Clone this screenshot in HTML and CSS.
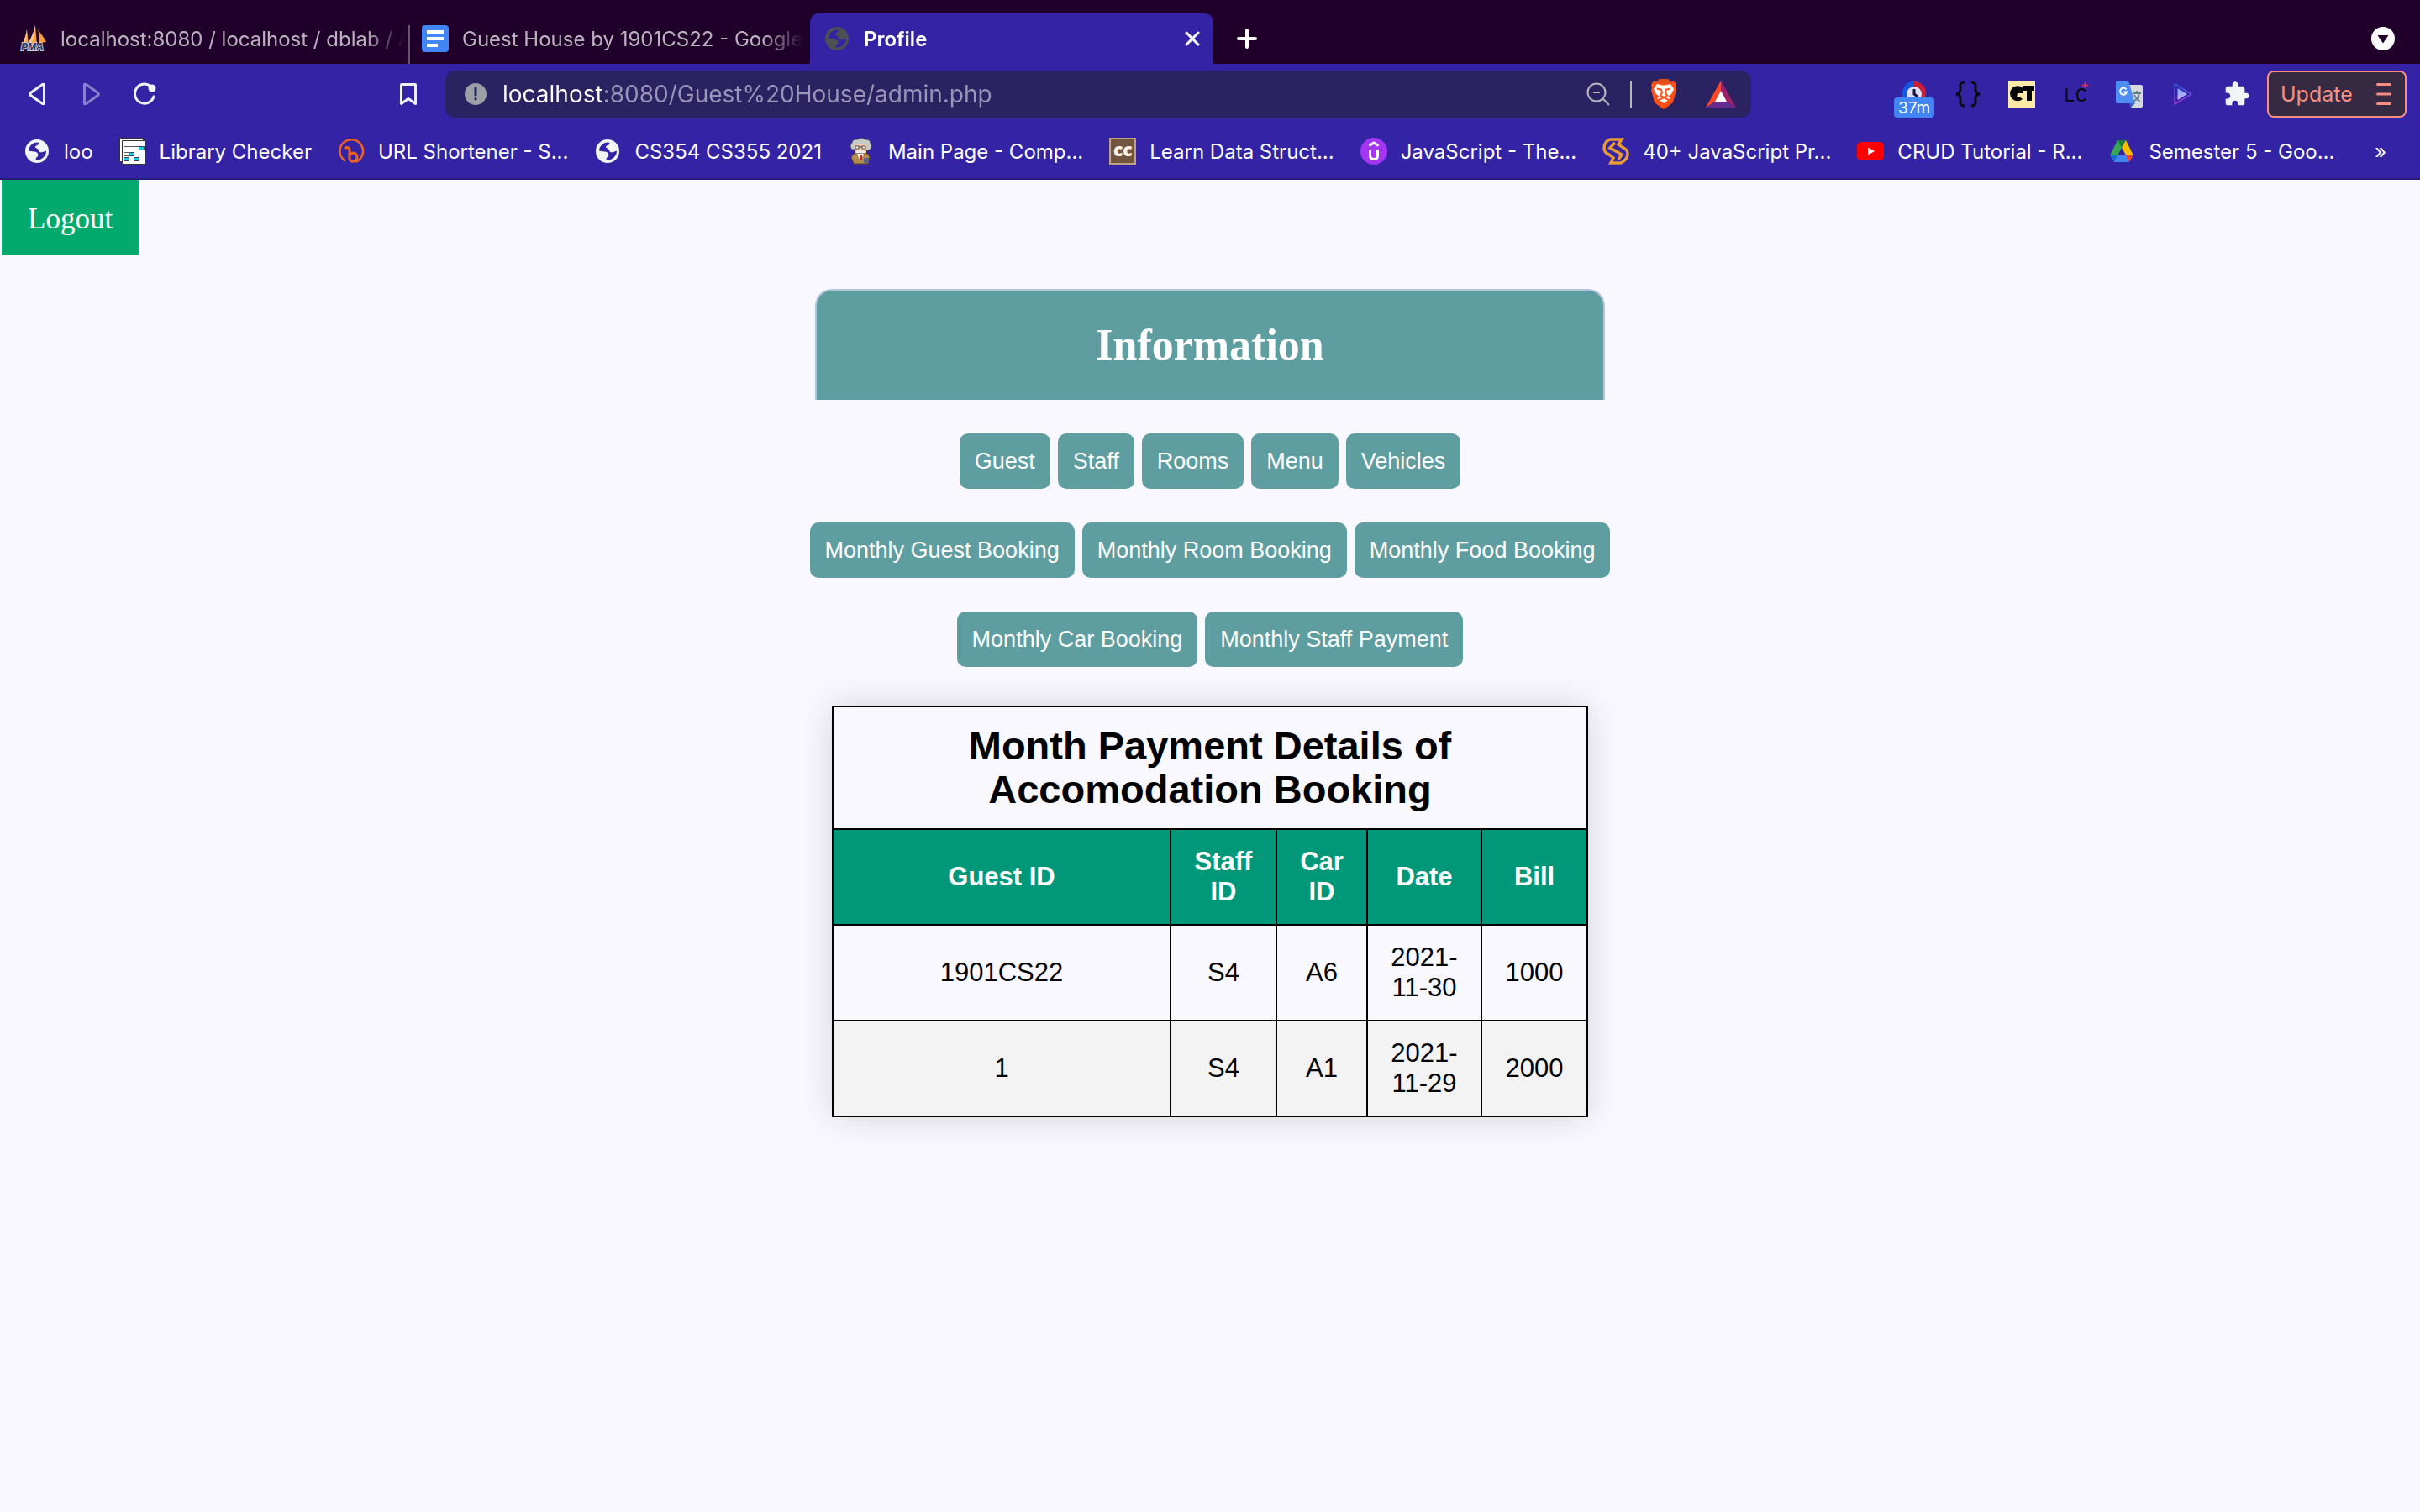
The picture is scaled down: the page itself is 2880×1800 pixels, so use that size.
FILE: index.html
```html
<!DOCTYPE html>
<html lang="en">
<head>
<meta charset="utf-8">
<title>Profile</title>
<link rel="stylesheet" href="styles.css">
</head>
<body>
<svg class="defs" aria-hidden="true">
  <symbol id="globe" viewBox="0 0 32 32">
    <path fill="currentColor" fill-rule="evenodd" d="M16 2a14 14 0 1 0 0 28a14 14 0 1 0 0-28ZM6 15.500A10.500 10.500 0 0 1 16 5.500L18.500 6C18.500 9.500 15 8.500 14 10.500C13.500 13 17.500 12 18 15C18.500 17.500 20.500 17.500 23 17L27 15.500A11 11 0 0 1 14.500 26.500L15 23.500C18 23 17.500 20 16.500 18C15 16 10 16.500 6 15.500Z"/>
  </symbol>
</svg>

<header class="browser">
  <nav class="tabs" aria-label="Tabs">
    <button class="tab tab-pma" type="button">
      <svg class="icon" viewBox="0 0 32 32"><path fill="#f89c3c" d="M8 5C7 12 5 18 2 23h8ZM18 0C16 10 12 17 9 23h11ZM20 3c2 4 9 12 11 17l-9 1c2-5 1-12-2-18Z"/><path fill="#fbc283" d="M8 5C7 12 5 18 2 23h4C8 17 8 11 8 5ZM18 0c-2 10-6 17-9 23h4c4-8 5-15 5-23Z"/><text x="1" y="30" font-family="Liberation Sans" font-size="12" font-weight="700" font-style="italic" fill="#2d3561" stroke="#c9c9da" stroke-width="2" paint-order="stroke">PMA</text></svg>
      <span class="tab-title">localhost:8080 / localhost / dblab / A</span>
    </button>
    <button class="tab tab-docs" type="button">
      <svg class="icon" viewBox="0 0 32 32"><rect width="32" height="32" rx="4" fill="#4285f4"/><path fill="#fff" d="M6 6h20v4H6zM6 14h20v4H6zM6 22h13v4H6z"/></svg>
      <span class="tab-title">Guest House by 1901CS22 - Google</span>
    </button>
    <button class="tab tab-active" type="button">
      <svg class="icon icon-dim"><use href="#globe"/></svg>
      <span class="tab-title">Profile</span>
      <svg class="close" viewBox="0 0 18 18"><path d="M2 2l14 14M16 2L2 16" stroke="#fff" stroke-width="3" stroke-linecap="round"/></svg>
    </button>
    <button class="tab-new" type="button" aria-label="New tab">
      <svg class="plus" viewBox="0 0 24 24"><path d="M12 2v20M2 12h20" stroke="#fff" stroke-width="4" stroke-linecap="round"/></svg>
    </button>
    <button class="tab-search" type="button" aria-label="Search tabs">
      <svg class="chevron" viewBox="0 0 28 28"><circle cx="14" cy="14" r="14" fill="#fff"/><path d="M7.500 10h13L14 19.500z" fill="#20002a"/></svg>
    </button>
  </nav>

  <div class="toolbar">
    <div class="nav-buttons">
      <button type="button" aria-label="Back"><svg class="icon" viewBox="0 0 32 32"><path d="M24.500 4.500v23q-1 .5-2 0L8.500 17.500q-1.500-1.500 0-3L22.500 4.500q1-.5 2 0Z" fill="none" stroke="#f1f3f4" stroke-width="3"/></svg></button>
      <button type="button" aria-label="Forward"><svg class="icon" viewBox="0 0 32 32"><path d="M8.500 4.500v23q1 .5 2 0L24.500 17.500q1.500-1.500 0-3L10.500 4.500q-1-.5-2 0Z" fill="none" stroke="#8b80cc" stroke-width="3"/></svg></button>
      <button type="button" aria-label="Reload"><svg class="icon" viewBox="0 0 32 32"><path d="M23 6.500A11.500 11.500 0 1 0 27 19" fill="none" stroke="#f1f3f4" stroke-width="3" stroke-linecap="round"/><circle cx="25" cy="9" r="4.500" fill="#f1f3f4"/></svg></button>
    </div>
    <button class="save" type="button" aria-label="Bookmark this page"><svg class="icon" viewBox="0 0 32 32"><path d="M8 4.500h16q.5 0 .5.500v22.500L16 21.500l-8.500 6V5q0-.5.500-.5Z" fill="none" stroke="#f1f3f4" stroke-width="3" stroke-linejoin="round"/></svg></button>
    <div class="address">
      <svg class="icon-info" viewBox="0 0 26 26"><circle cx="13" cy="13" r="13" fill="#9aa0a6"/><path d="M13 6v8M13 18.500v.5" stroke="#2b2262" stroke-width="3" stroke-linecap="round"/></svg>
      <input class="url" type="text" aria-label="Address" value="localhost:8080/Guest%20House/admin.php">
      <svg class="icon-zoom" viewBox="0 0 28 28"><g fill="none" stroke="#b8b5bd" stroke-width="2"><circle cx="12" cy="12" r="10.500"/><path d="M19.500 19.500L27 27M8 12h8"/></g></svg>
      <span class="divider"></span>
      <svg class="icon-brave" viewBox="0 0 32 36"><path fill="#ff5017" d="M11 0h10l3 3 4-1 3 5-1 4 1 2-4 15-5 4-6 4-6-4-5-4L1 13l1-2-1-4 3-5 4 1Z"/><path fill="#e24b1a" d="M11 0h10l3 3 4-1 2 3H2l2-3 4 1Z"/><path fill="#fff" d="M8 6l4 1q4 1 8 0l4-1 4 6-3 6-4 3 3 2-8 6-8-6 3-2-4-3-3-6Z"/><path fill="none" stroke="#ff5017" stroke-width="2" d="M8 11.500l5 1 1 4-2 3 4 2.500 4-2.500-2-3 1-4 5-1M10 25l6-3 6 3"/></svg>
      <svg class="icon-bat" viewBox="0 0 36 32"><path fill="#ff4724" d="M18 0v12l-7 13L0 32Z"/><path fill="#9e1f63" d="M18 0v12l7 13 11 7Z"/><path fill="#662d91" d="M0 32l11-7h14l11 7Z"/><path fill="#fff" d="M18 12l7 13H11Z"/></svg>
    </div>
    <div class="extensions">
      <button class="timer" type="button" aria-label="Timer"><svg class="icon" viewBox="0 0 32 32"><path fill="#1558e0" d="M16 1a14 14 0 0 0 0 28Z"/><path fill="#cc1f36" d="M16 1a14 14 0 0 1 0 28Z"/><circle cx="16" cy="16" r="9" fill="#dfe0f5"/><path d="M16 10v6l4 3" fill="none" stroke="#14143c" stroke-width="3"/></svg><span class="badge">37m</span></button>
      <button type="button" aria-label="JSON viewer"><svg class="icon" viewBox="0 0 32 32"><path d="M12 2Q6 2 7 8v3q0 4-5 5 5 1 5 5v3q-1 6 5 6M20 2q6 0 5 6v3q0 4 5 5-5 1-5 5v3q1 6-5 6" fill="none" stroke="#0c0c14" stroke-width="3"/></svg></button>
      <button type="button" aria-label="CT"><svg class="icon" viewBox="0 0 32 32"><path fill="#ffeaa7" d="M0 0h32v32H0z"/><path fill="#050505" d="M17 8.500A9 9 0 1 0 17 22l-4-3-3 1 1-5h7ZM18 6h13v6h-3v12h-6V12h-4Z"/></svg></button>
      <button type="button" aria-label="LC"><svg class="icon" viewBox="0 0 32 32"><path d="M5.500 9v15H14M28 13q-1-3-5-3-5 0-5 7t5 7q4 0 5-3" fill="none" stroke="#08080c" stroke-width="2"/><path d="M27.500 2v7M24 5.500h7" stroke="#f0304a" stroke-width="1.500"/></svg></button>
      <button type="button" aria-label="Translate"><svg class="icon" viewBox="0 0 32 32"><path fill="#d7d9dc" d="M13 5h17q2 0 2 2v23q0 2-2 2H18Z"/><path d="M20 15h10M25 12v3M28 15q-1 6-7 10M22 17q2 5 7 8" fill="none" stroke="#607d8b" stroke-width="1.800"/><path fill="#4f8df5" d="M2 0h13l8 27H2q-2 0-2-2V2q0-2 2-2Z"/><path fill="#3a66c4" d="M16 27h7l-5 5Z"/><path d="M12.500 10.500A4 4 0 1 0 13 13.500H9.500" fill="none" stroke="#fff" stroke-width="2"/></svg></button>
      <button type="button" aria-label="Player"><svg class="icon" viewBox="0 0 32 32"><defs><linearGradient id="edge" x2="0" y2="1"><stop stop-color="#2b5be8"/><stop offset="1" stop-color="#a53be0"/></linearGradient><linearGradient id="core" x2="0" y2="1"><stop stop-color="#6fa8ff"/><stop offset="1" stop-color="#d9b4ff"/></linearGradient></defs><path d="M6 4L26 16 6 28Z" fill="none" stroke="url(#edge)" stroke-width="1.500" stroke-linejoin="round"/><path d="M9.500 9L21 16 9.500 23Z" fill="url(#core)"/></svg></button>
      <button type="button" aria-label="Extensions"><svg class="icon" viewBox="0 0 24 24"><path fill="#f1f3f4" d="M20.500 11H19V7c0-1.100-.9-2-2-2h-4V3.500C13 2.120 11.880 1 10.500 1S8 2.120 8 3.500V5H4c-1.100 0-1.990.9-1.990 2v3.800H3.500c1.490 0 2.700 1.210 2.700 2.700s-1.210 2.700-2.700 2.700H2V20c0 1.100.9 2 2 2h3.800v-1.500c0-1.490 1.210-2.700 2.700-2.700s2.700 1.210 2.700 2.700V22H17c1.100 0 2-.9 2-2v-4h1.500c1.380 0 2.500-1.120 2.500-2.500S21.880 11 20.500 11Z"/></svg></button>
    </div>
    <button class="update" type="button">Update <svg class="menu" viewBox="0 0 18 26"><path d="M1.500 1.500h15M1.500 13h15M1.500 24.500h15" stroke="#f98e80" stroke-width="3" stroke-linecap="round"/></svg></button>
  </div>

  <nav class="bookmarks" aria-label="Bookmarks">
    <a href="#"><svg class="icon icon-light"><use href="#globe"/></svg>loo</a>
    <a href="#"><svg class="icon" viewBox="0 0 32 32"><path fill="#fff" stroke="#333" d="M.500.500h28v28H.500z"/><path fill="#fff" stroke="#333" d="M3.500 3.500h28v28h-28z"/><path fill="#fff" stroke="#555" d="M5.500 10.500h24v4h-24zM5.500 17.500h12v4h-12z"/><path fill="#1fc8e8" stroke="#345" d="M23.500 10.500h6v4h-6zM11.500 17.500h6v4h-6zM5.500 23.500h6v4h-6zM17.500 23.500h6v4h-6z"/></svg>Library Checker</a>
    <a href="#"><svg class="icon" viewBox="0 0 32 32"><g fill="none" stroke="#ee6123" stroke-width="2.500" stroke-linecap="round"><path d="M8 27A13.800 13.800 0 1 1 22 28.500"/><path stroke-width="3" d="M9 12q5-2 5 3v10q1 4 5 3 4-1 4-5t-4-5q-4 0-5 4"/></g></svg>URL Shortener - S...</a>
    <a href="#"><svg class="icon icon-light"><use href="#globe"/></svg>CS354 CS355 2021</a>
    <a href="#"><svg class="icon" viewBox="0 0 32 32"><path fill="#c9c9c9" stroke="#555" d="M5 14Q1 10 5 6q0-4 6-4 6-3 10 0 6 0 6 5 3 5-2 8Z"/><path fill="#f1c9a0" d="M9 8h13v11H9z"/><path d="M9 10h4v3H9zM17 10h4v3h-4zM13 11h4" fill="#fff" stroke="#444"/><path fill="#eee" d="M10 16q5-3 10 0v2H10z"/><path fill="#b58a4a" stroke="#5c4420" d="M7 19h17l2 4-2 8H7l-3-8Z"/><path fill="#fff" d="M11 19h8l-4 9Z"/><path fill="#c22" d="M14 20h3v6h-3z"/><path fill="#5a6688" d="M19 24h6v6h-6z"/></svg>Main Page - Comp...</a>
    <a href="#"><svg class="icon" viewBox="0 0 32 32"><path fill="#72553f" stroke="#c0a088" stroke-width="2" d="M1 1h30v30H1z"/><text x="5" y="22" font-family="Open Sans" font-weight="800" font-size="21" fill="#fff4e6">cc</text></svg>Learn Data Struct...</a>
    <a href="#"><svg class="icon" viewBox="0 0 32 32"><circle cx="16" cy="16" r="16" fill="#a435f0"/><path d="M10.500 9.500L16 6l5.500 3.500M11.500 14v7q0 4.500 4.500 4.500t4.500-4.500v-7" fill="none" stroke="#fff" stroke-width="3"/></svg>JavaScript - The...</a>
    <a href="#"><svg class="icon" viewBox="0 0 32 32"><path d="M23 2H9Q2 5 2 12q0 6 6 8l5 4-3 6h12q8-4 8-11 0-5-5-7l-6-4ZM15 6l-6 6 9 5 5 3-4 6" fill="none" stroke="#e79b35" stroke-width="3.500"/></svg>40+ JavaScript Pr...</a>
    <a href="#"><svg class="icon" viewBox="0 0 32 32"><rect y="5" width="32" height="22" rx="5" fill="#f00"/><path fill="#fff" d="M13 11.500l8 4.500-8 4.500z"/></svg>CRUD Tutorial - R...</a>
    <a href="#"><svg class="icon" viewBox="0 0 32 32"><path fill="#34a853" d="M11 3h5l3 9L8 29 2 21Z"/><path fill="#188038" d="M11 3h10l-5 9Z"/><path fill="#fbbc04" d="M21 3l9 18h-9L16 12Z"/><path fill="#3423a5" d="M16 12l5 9H11Z"/><path fill="#1967d2" d="M2 21h9l-4 8Z"/><path fill="#4285f4" d="M11 21h10l4 8H7Z"/><path fill="#ea4335" d="M21 21h9l-5 8Z"/></svg>Semester 5 - Goo...</a>
    <button class="more" type="button" aria-label="More bookmarks">»</button>
  </nav>
</header>

<main class="page">
  <a class="logout" href="#">Logout</a>
  <div class="content">
    <div class="header"><h2>Information</h2></div>
    <div class="actions">
      <button class="btn" type="button">Guest</button>
      <button class="btn" type="button">Staff</button>
      <button class="btn" type="button">Rooms</button>
      <button class="btn" type="button">Menu</button>
      <button class="btn" type="button">Vehicles</button>
    </div>
    <div class="actions">
      <button class="btn" type="button">Monthly Guest Booking</button>
      <button class="btn" type="button">Monthly Room Booking</button>
      <button class="btn" type="button">Monthly Food Booking</button>
    </div>
    <div class="actions">
      <button class="btn" type="button">Monthly Car Booking</button>
      <button class="btn" type="button">Monthly Staff Payment</button>
    </div>
    <table class="details">
      <colgroup><col class="col-guest"><col class="col-staff"><col class="col-car"><col class="col-date"><col></colgroup>
      <thead>
        <tr class="title"><th colspan="5">Month Payment Details of Accomodation Booking</th></tr>
        <tr class="labels"><th>Guest ID</th><th>Staff ID</th><th>Car ID</th><th>Date</th><th>Bill</th></tr>
      </thead>
      <tbody>
        <tr><td>1901CS22</td><td>S4</td><td>A6</td><td>2021-11-30</td><td>1000</td></tr>
        <tr><td>1</td><td>S4</td><td>A1</td><td>2021-11-29</td><td>2000</td></tr>
      </tbody>
    </table>
  </div>
</main>
</body>
</html>
```
FILE: styles.css
```css
* { box-sizing: border-box; }

body {
  margin: 0;
  min-height: 100vh;
  background: #f9f8ff;
  font-family: "Liberation Serif", serif;
}

button {
  margin: 0;
  padding: 0;
  border: 0;
  background: none;
  color: inherit;
  font: inherit;
}

svg { display: block; flex: none; }
.defs { position: absolute; width: 0; height: 0; }
.icon { width: 32px; height: 32px; }
.icon-light { color: #f1f3f4; }
.icon-dim { color: #4d5156; }

/* Browser frame */
.browser {
  background: #3423a5;
  border-bottom: 2px solid #281a78;
  color: #fff;
  font-family: Inter, sans-serif;
  font-size: 24px;
}

.tabs {
  display: flex;
  height: 76px;
  padding-top: 16px;
  background: #20002a;
}

.tab {
  display: flex;
  align-items: center;
  gap: 16px;
  width: 480px;
  padding: 0 16px;
  color: #bcb2bf;
  text-align: left;
}

.tab-pma { width: 486px; padding-left: 24px; padding-right: 4px; }
.tab-docs {
  width: 478px;
  padding: 0 8px 0 14px;
  border-left: 2px solid #6a5570;
  clip-path: inset(14px 0 0 0);
}

.tab-title {
  flex: 1;
  overflow: hidden;
  white-space: nowrap;
  mask-image: linear-gradient(to right, #000 calc(100% - 48px), transparent);
}

.tab-active {
  border-radius: 10px 10px 0 0;
  background: #3423a5;
  color: #fff;
  font-weight: 600;
}

.close { width: 18px; height: 18px; }
.tab-new { padding: 0 28px; }
.plus { width: 24px; height: 24px; }
.tab-search { margin-left: auto; padding-right: 30px; }
.chevron { width: 28px; height: 28px; }

.toolbar {
  display: flex;
  align-items: center;
  height: 72px;
  padding: 0 16px 0 28px;
}

.nav-buttons { display: flex; gap: 32px; }
.save { margin: 0 28px 0 282px; }

.address {
  display: flex;
  flex: 1;
  align-items: center;
  height: 56px;
  padding: 0 18px 0 23px;
  border-radius: 12px;
  background: #2b2262;
}

.icon-info { width: 26px; height: 26px; }

.url {
  flex: 1;
  min-width: 0;
  margin-left: 19px;
  padding: 0;
  border: 0;
  outline: 0;
  background: linear-gradient(to right, #fff 118px, #9b95b8 118px) text;
  color: transparent;
  font: 28px/36px Inter, sans-serif;
}

.icon-zoom { width: 28px; height: 28px; }
.divider { width: 2px; height: 32px; margin: 0 22px 0 24px; background: #b8b5bd; }
.icon-brave { width: 32px; height: 36px; }
.icon-bat { width: 36px; height: 32px; margin-left: 34px; }

.extensions { display: flex; gap: 32px; margin: 0 20px 0 178px; }
.timer { position: relative; }
.badge {
  position: absolute;
  top: 20px;
  left: -8px;
  width: 48px;
  padding-top: 2px;
  border-radius: 4px;
  background: #4285f4;
  font-size: 19px;
  line-height: 22px;
  text-align: center;
}

.update {
  display: flex;
  align-items: center;
  justify-content: space-between;
  width: 166px;
  height: 56px;
  padding: 0 16px 0 14px;
  border: 2px solid #f98e80;
  border-radius: 8px;
  background: #352a42;
  color: #f98e80;
  font-size: 25px;
}

.menu { width: 18px; height: 26px; }

.bookmarks {
  display: flex;
  align-items: center;
  gap: 31px;
  height: 64px;
  padding: 0 40px 0 28px;
}

.bookmarks a {
  display: flex;
  align-items: center;
  gap: 16px;
  color: #fff;
  text-decoration: none;
  white-space: nowrap;
}

.more { margin-left: auto; }

/* Page */
.page {
  display: flex;
  flex-direction: column;
  align-items: flex-start;
}

.logout {
  margin-left: 2px;
  padding: 26px 31px 22px;
  background: #04aa6d;
  color: #fff;
  font-size: 35px;
  line-height: 42px;
  text-decoration: none;
}

.content {
  display: flex;
  flex-direction: column;
  align-items: center;
  gap: 40px;
  width: 100%;
  padding-top: 40px;
}

.header {
  width: 940px;
  padding: 40px;
  border: 2px solid #b0c4de;
  border-bottom: 0;
  border-radius: 20px 20px 0 0;
  background: #5f9ea0;
  color: #fff;
  text-align: center;
}

.header h2 { margin: 0; font-size: 52px; line-height: 50px; }

.actions { display: flex; justify-content: center; gap: 9px; }

.btn {
  height: 66px;
  padding: 0 18px;
  border-radius: 10px;
  background: #5f9ea0;
  color: #fff;
  font: 27px/32px "Liberation Sans", sans-serif;
}

.details {
  width: 900px;
  margin-top: 6px;
  border-collapse: collapse;
  table-layout: fixed;
  box-shadow: 0 0 40px rgba(0, 0, 0, 0.15);
  font: 31px/36px "Liberation Sans", sans-serif;
  text-align: center;
}

.details th,
.details td {
  padding: 20px 24px;
  border: 2px solid #000;
}

.col-guest { width: 402px; }
.col-staff { width: 126px; }
.col-car { width: 108px; }
.col-date { width: 136px; }

.title th { font-size: 47px; line-height: 52px; }
.labels { background: #009879; color: #fff; }
.details tbody tr:nth-child(even) { background: #f3f3f3; }
```
